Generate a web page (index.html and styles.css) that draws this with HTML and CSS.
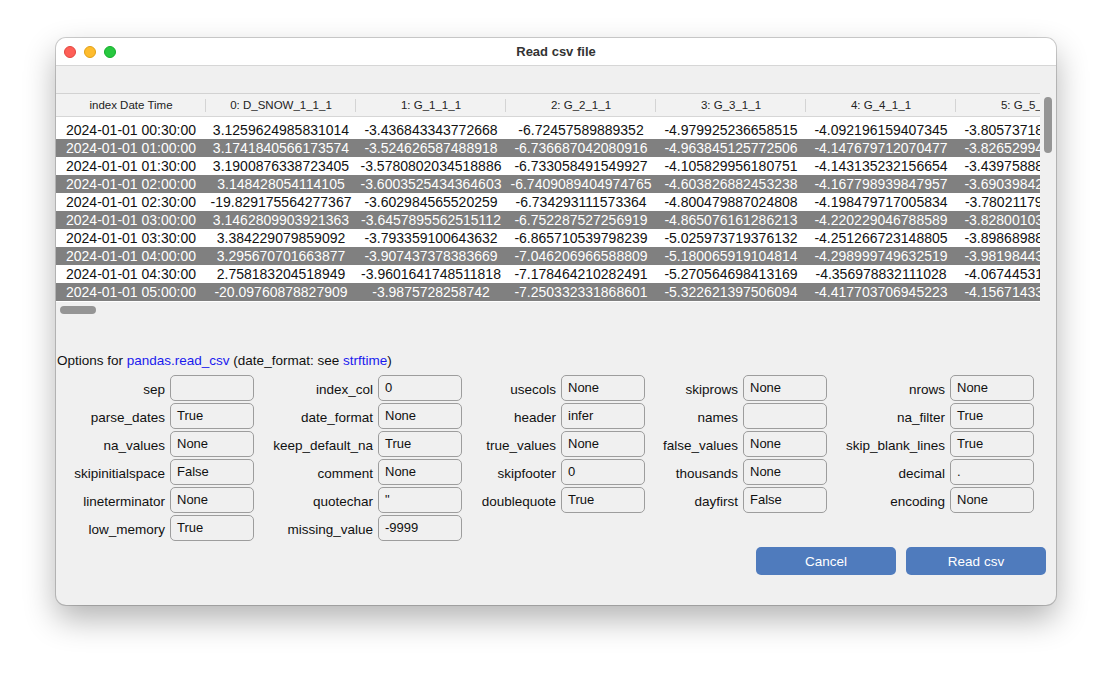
FILE: index.html
```html
<!DOCTYPE html>
<html>
<head>
<meta charset="utf-8">
<title>Read csv file</title>
<link rel="stylesheet" href="styles.css">
</head>
<body>
<div class="window">
  <div class="titlebar">
    <div class="lights">
      <span class="light red"></span>
      <span class="light yellow"></span>
      <span class="light green"></span>
    </div>
    <div class="title">Read csv file</div>
    <div></div>
  </div>
  <div class="content">
    <div class="toolbar"></div>
    <div class="table-area">
      <div class="table-view">
        <div class="thead">
          <div class="th">index Date Time</div>
          <div class="th">0: D_SNOW_1_1_1</div>
          <div class="th">1: G_1_1_1</div>
          <div class="th">2: G_2_1_1</div>
          <div class="th">3: G_3_1_1</div>
          <div class="th">4: G_4_1_1</div>
          <div class="th">5: G_5_1_1</div>
        </div>
        <div class="tbody">
          <div class="tr"><div class="td">2024-01-01 00:30:00</div><div class="td">3.1259624985831014</div><div class="td">-3.436843343772668</div><div class="td">-6.72457589889352</div><div class="td">-4.979925236658515</div><div class="td">-4.092196159407345</div><div class="td">-3.805737185432178</div></div>
          <div class="tr alt"><div class="td">2024-01-01 01:00:00</div><div class="td">3.1741840566173574</div><div class="td">-3.524626587488918</div><div class="td">-6.736687042080916</div><div class="td">-4.963845125772506</div><div class="td">-4.147679712070477</div><div class="td">-3.826529943217654</div></div>
          <div class="tr"><div class="td">2024-01-01 01:30:00</div><div class="td">3.1900876338723405</div><div class="td">-3.5780802034518886</div><div class="td">-6.733058491549927</div><div class="td">-4.105829956180751</div><div class="td">-4.143135232156654</div><div class="td">-3.439758886512347</div></div>
          <div class="tr alt"><div class="td">2024-01-01 02:00:00</div><div class="td">3.148428054114105</div><div class="td">-3.6003525434364603</div><div class="td">-6.7409089404974765</div><div class="td">-4.603826882453238</div><div class="td">-4.167798939847957</div><div class="td">-3.690398421765432</div></div>
          <div class="tr"><div class="td">2024-01-01 02:30:00</div><div class="td">-19.829175564277367</div><div class="td">-3.602984565520259</div><div class="td">-6.734293111573364</div><div class="td">-4.800479887024808</div><div class="td">-4.198479717005834</div><div class="td">-3.780211793456218</div></div>
          <div class="tr alt"><div class="td">2024-01-01 03:00:00</div><div class="td">3.1462809903921363</div><div class="td">-3.6457895562515112</div><div class="td">-6.752287527256919</div><div class="td">-4.865076161286213</div><div class="td">-4.220229046788589</div><div class="td">-3.828001034567812</div></div>
          <div class="tr"><div class="td">2024-01-01 03:30:00</div><div class="td">3.384229079859092</div><div class="td">-3.793359100643632</div><div class="td">-6.865710539798239</div><div class="td">-5.025973719376132</div><div class="td">-4.251266723148805</div><div class="td">-3.898689884321567</div></div>
          <div class="tr alt"><div class="td">2024-01-01 04:00:00</div><div class="td">3.295670701663877</div><div class="td">-3.907437378383669</div><div class="td">-7.046206966588809</div><div class="td">-5.180065919104814</div><div class="td">-4.298999749632519</div><div class="td">-3.981984436789123</div></div>
          <div class="tr"><div class="td">2024-01-01 04:30:00</div><div class="td">2.758183204518949</div><div class="td">-3.9601641748511818</div><div class="td">-7.178464210282491</div><div class="td">-5.270564698413169</div><div class="td">-4.356978832111028</div><div class="td">-4.067445312345678</div></div>
          <div class="tr alt"><div class="td">2024-01-01 05:00:00</div><div class="td">-20.09760878827909</div><div class="td">-3.9875728258742</div><div class="td">-7.250332331868601</div><div class="td">-5.322621397506094</div><div class="td">-4.417703706945223</div><div class="td">-4.156714332198765</div></div>
        </div>
      </div>
      <div class="vscroll"><div class="vthumb"></div></div>
    </div>
    <div class="hscroll"><div class="hthumb"></div></div>
    <div class="options-label">Options for <span class="link">pandas.read_csv</span> (date_format: see <span class="link">strftime</span>)</div>
    <div class="options-grid">
      <div class="opt-label">sep</div><div class="opt-input"></div>
      <div class="opt-label">index_col</div><div class="opt-input">0</div>
      <div class="opt-label">usecols</div><div class="opt-input">None</div>
      <div class="opt-label">skiprows</div><div class="opt-input">None</div>
      <div class="opt-label">nrows</div><div class="opt-input">None</div>

      <div class="opt-label">parse_dates</div><div class="opt-input">True</div>
      <div class="opt-label">date_format</div><div class="opt-input">None</div>
      <div class="opt-label">header</div><div class="opt-input">infer</div>
      <div class="opt-label">names</div><div class="opt-input"></div>
      <div class="opt-label">na_filter</div><div class="opt-input">True</div>

      <div class="opt-label">na_values</div><div class="opt-input">None</div>
      <div class="opt-label">keep_default_na</div><div class="opt-input">True</div>
      <div class="opt-label">true_values</div><div class="opt-input">None</div>
      <div class="opt-label">false_values</div><div class="opt-input">None</div>
      <div class="opt-label">skip_blank_lines</div><div class="opt-input">True</div>

      <div class="opt-label">skipinitialspace</div><div class="opt-input">False</div>
      <div class="opt-label">comment</div><div class="opt-input">None</div>
      <div class="opt-label">skipfooter</div><div class="opt-input">0</div>
      <div class="opt-label">thousands</div><div class="opt-input">None</div>
      <div class="opt-label">decimal</div><div class="opt-input">.</div>

      <div class="opt-label">lineterminator</div><div class="opt-input">None</div>
      <div class="opt-label">quotechar</div><div class="opt-input">"</div>
      <div class="opt-label">doublequote</div><div class="opt-input">True</div>
      <div class="opt-label">dayfirst</div><div class="opt-input">False</div>
      <div class="opt-label">encoding</div><div class="opt-input">None</div>

      <div class="opt-label">low_memory</div><div class="opt-input">True</div>
      <div class="opt-label">missing_value</div><div class="opt-input">-9999</div>
    </div>
    <div class="buttons">
      <button class="btn">Cancel</button>
      <button class="btn">Read csv</button>
    </div>
  </div>
</div>
</body>
</html>
```

FILE: styles.css
```css
* { box-sizing: border-box; }

html, body {
  margin: 0;
  padding: 0;
  width: 1112px;
  height: 680px;
  background: #ffffff;
  overflow: hidden;
  font-family: "Liberation Sans", Arial, sans-serif;
  color: #111;
}

body {
  padding: 38px 0 0 56px;
}

.window {
  width: 1000px;
  height: 567px;
  border-radius: 10px;
  overflow: hidden;
  background: #f0f0f0;
  box-shadow: 0 0 0 1px rgba(0,0,0,0.18), 0 14px 32px rgba(0,0,0,0.30);
  display: flex;
  flex-direction: column;
}

.titlebar {
  height: 28px;
  flex: none;
  background: #ffffff;
  border-bottom: 1px solid #d6d6d6;
  display: grid;
  grid-template-columns: 1fr auto 1fr;
  align-items: center;
}

.lights {
  display: flex;
  gap: 8px;
  padding-left: 8px;
}

.light {
  width: 12px;
  height: 12px;
  border-radius: 50%;
  display: block;
}
.light.red { background: #fe5f57; border: 0.5px solid #e2463f; }
.light.yellow { background: #febc2e; border: 0.5px solid #e1a116; }
.light.green { background: #28c840; border: 0.5px solid #14ae2b; }

.title {
  font-size: 13px;
  font-weight: bold;
  color: #333;
}

.content {
  flex: 1;
  display: flex;
  flex-direction: column;
}

.toolbar {
  height: 27px;
  flex: none;
}

.table-area {
  display: flex;
  flex: none;
}

.table-view {
  width: 984px;
  overflow: hidden;
  border-top: 1px solid #d2d2d2;
}

.thead {
  display: flex;
  height: 23px;
  background: #f2f2f2;
  border-bottom: 1px solid #d6d6d6;
}

.th {
  width: 150px;
  flex: none;
  text-align: center;
  font-size: 11.5px;
  line-height: 22px;
  color: #222;
  white-space: nowrap;
  overflow: hidden;
  position: relative;
}
.th::after {
  content: "";
  position: absolute;
  right: 0;
  top: 5px;
  bottom: 4px;
  width: 1px;
  background: #d4d4d4;
}

.tbody {
  background: #ffffff;
  padding: 4px 0 1px;
}

.tr {
  display: flex;
  height: 18px;
}
.tr.alt {
  background: #808080;
  color: #ffffff;
}

.td {
  width: 150px;
  flex: none;
  text-align: center;
  font-size: 14px;
  line-height: 18px;
  white-space: nowrap;
  overflow: hidden;
  padding: 0 2px;
}

.vscroll {
  width: 16px;
  flex: none;
  padding: 4px 0 0 4px;
}
.vthumb {
  width: 8px;
  height: 56px;
  border-radius: 4px;
  background: #959595;
}

.hscroll {
  height: 16px;
  flex: none;
  padding: 4px 0 0 4px;
}
.hthumb {
  width: 36px;
  height: 8px;
  border-radius: 4px;
  background: #959595;
}

.options-label {
  margin-top: 35px;
  padding-left: 1px;
  font-size: 13.5px;
  line-height: 16px;
  color: #111;
}
.link { color: #1a1aee; }

.options-grid {
  margin-top: 6px;
  display: grid;
  grid-template-columns: 109px 84px 114px 84px 89px 84px 88px 84px 113px 84px;
  column-gap: 5px;
  row-gap: 2px;
  grid-auto-rows: 26px;
}

.opt-label {
  text-align: right;
  font-size: 13.5px;
  line-height: 16px;
  align-self: center;
  padding-top: 3px;
  white-space: nowrap;
  color: #111;
}

.opt-input {
  border: 1px solid #9d9d9d;
  border-radius: 5px;
  padding: 0 0 1px 6px;
  font-size: 13px;
  line-height: 23px;
  color: #111;
}

.buttons {
  margin-top: 6px;
  display: flex;
  justify-content: flex-end;
  gap: 10px;
  padding-right: 10px;
}

.btn {
  width: 140px;
  height: 28px;
  border: none;
  border-radius: 5px;
  background: #4f7bbd;
  color: #ffffff;
  font-family: "Liberation Sans", Arial, sans-serif;
  font-size: 13.5px;
  padding: 0;
}
```
